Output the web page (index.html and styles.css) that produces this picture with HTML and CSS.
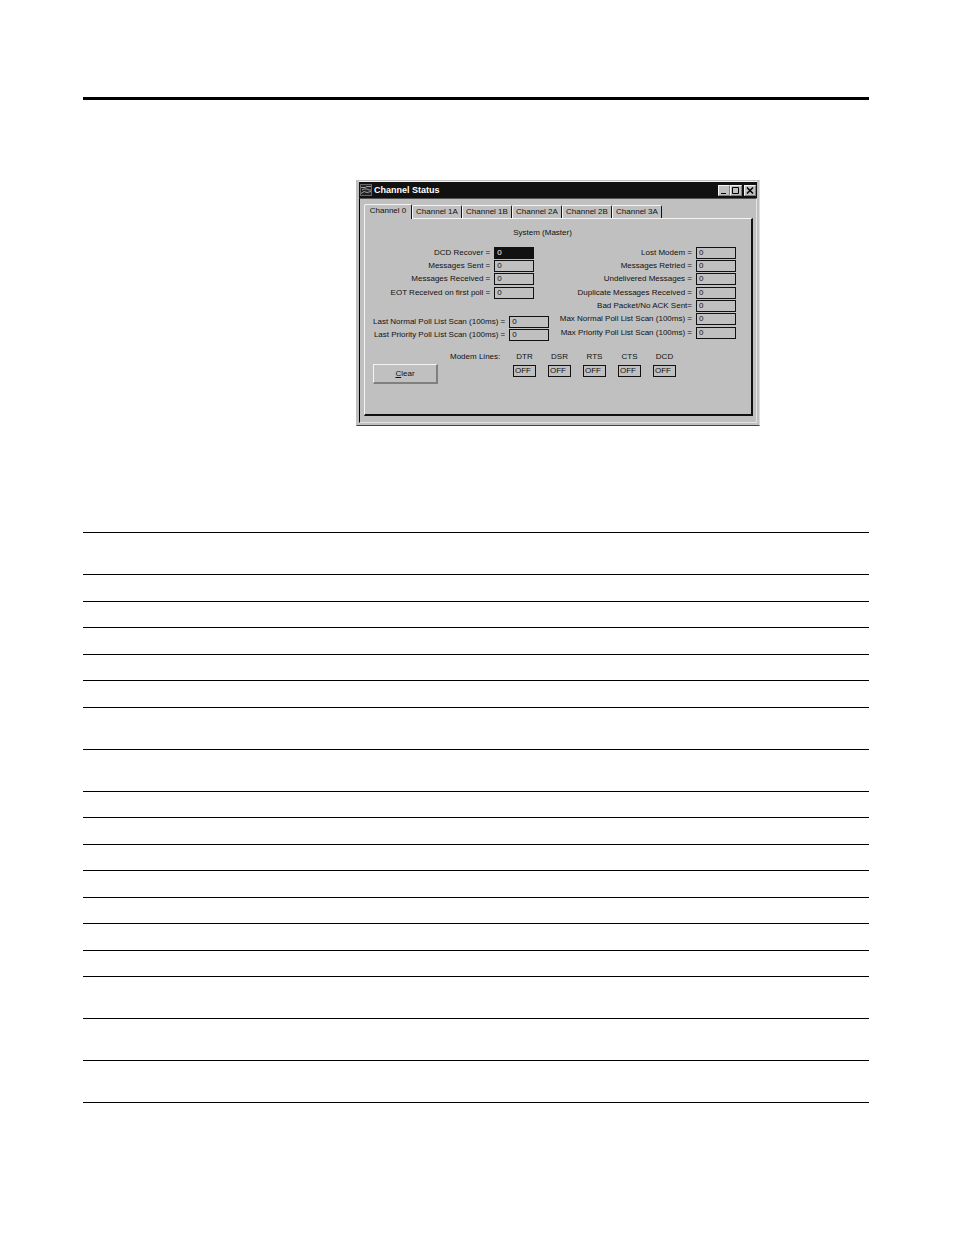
FILE: index.html
```html
<!DOCTYPE html>
<html lang="en">
  <head>
    <meta charset="UTF-8" />
    <meta name="viewport" content="width=device-width, initial-scale=1.0" />
    <title>Channel Status</title>
    <link rel="stylesheet" href="styles.css">
  </head>
  <body>
    <main class="page">
      <hr class="page-rule" />

      <section class="window">
        <header class="title-bar">
          <svg class="title-icon" viewBox="0 0 12 12" aria-hidden="true">
            <rect x="0.5" y="0.5" width="11" height="11" fill="#222" stroke="#666" />
            <path d="M1 3.5h4l2-1h4M2 6l2-1h3l2 1h2M1 9.5l3-2 3 1 4-1" fill="none" stroke="#999" />
          </svg>
          <h1>Channel Status</h1>
          <div class="title-buttons">
            <button type="button" aria-label="Minimize">
              <svg viewBox="0 0 10 9"><path d="M2 7.5h5" /></svg>
            </button>
            <button type="button" aria-label="Maximize">
              <svg viewBox="0 0 10 9"><path d="M1.5 1.5h6v6h-6z" /></svg>
            </button>
            <button type="button" aria-label="Close" class="close">
              <svg viewBox="0 0 10 9"><path d="M2 1.5l6 6M8 1.5l-6 6" stroke-width="1.5" /></svg>
            </button>
          </div>
        </header>

        <div class="window-body">
          <div class="tabs" role="tablist">
            <button type="button" role="tab" class="tab active" aria-selected="true">Channel 0</button>
            <button type="button" role="tab" class="tab">Channel 1A</button>
            <button type="button" role="tab" class="tab">Channel 1B</button>
            <button type="button" role="tab" class="tab">Channel 2A</button>
            <button type="button" role="tab" class="tab">Channel 2B</button>
            <button type="button" role="tab" class="tab">Channel 3A</button>
          </div>

          <div class="panel">
            <h2>System (Master)</h2>

            <div class="counters">
              <div class="column">
                <div class="fields">
                  <label for="dcd-recover">DCD Recover =</label>
                  <input id="dcd-recover" class="selected" value="0" readonly />
                  <label for="sent">Messages Sent =</label>
                  <input id="sent" value="0" readonly />
                  <label for="received">Messages Received =</label>
                  <input id="received" value="0" readonly />
                  <label for="eot">EOT Received on first poll =</label>
                  <input id="eot" value="0" readonly />
                </div>
                <div class="fields scan">
                  <label for="last-normal">Last Normal Poll List Scan (100ms) =</label>
                  <input id="last-normal" value="0" readonly />
                  <label for="last-priority">Last Priority Poll List Scan (100ms) =</label>
                  <input id="last-priority" value="0" readonly />
                </div>
              </div>

              <div class="fields">
                <label for="lost">Lost Modem =</label>
                <input id="lost" value="0" readonly />
                <label for="retried">Messages Retried =</label>
                <input id="retried" value="0" readonly />
                <label for="undelivered">Undelivered Messages =</label>
                <input id="undelivered" value="0" readonly />
                <label for="duplicate">Duplicate Messages Received =</label>
                <input id="duplicate" value="0" readonly />
                <label for="bad-packet">Bad Packet/No ACK Sent=</label>
                <input id="bad-packet" value="0" readonly />
                <label for="max-normal">Max Normal Poll List Scan (100ms) =</label>
                <input id="max-normal" value="0" readonly />
                <label for="max-priority">Max Priority Poll List Scan (100ms) =</label>
                <input id="max-priority" value="0" readonly />
              </div>
            </div>

            <div class="bottom">
              <button type="button" class="clear"><u>C</u>lear</button>
              <span class="lines-title">Modem Lines:</span>
              <div class="line">
                <label for="dtr">DTR</label>
                <input id="dtr" value="OFF" readonly />
              </div>
              <div class="line">
                <label for="dsr">DSR</label>
                <input id="dsr" value="OFF" readonly />
              </div>
              <div class="line">
                <label for="rts">RTS</label>
                <input id="rts" value="OFF" readonly />
              </div>
              <div class="line">
                <label for="cts">CTS</label>
                <input id="cts" value="OFF" readonly />
              </div>
              <div class="line">
                <label for="dcd">DCD</label>
                <input id="dcd" value="OFF" readonly />
              </div>
            </div>
          </div>
        </div>
      </section>

      <table class="ruled">
        <tbody>
          <tr class="tall"><td></td></tr>
          <tr><td></td></tr>
          <tr><td></td></tr>
          <tr><td></td></tr>
          <tr><td></td></tr>
          <tr><td></td></tr>
          <tr class="tall"><td></td></tr>
          <tr class="tall"><td></td></tr>
          <tr><td></td></tr>
          <tr><td></td></tr>
          <tr><td></td></tr>
          <tr><td></td></tr>
          <tr><td></td></tr>
          <tr><td></td></tr>
          <tr><td></td></tr>
          <tr class="tall"><td></td></tr>
          <tr class="tall"><td></td></tr>
          <tr class="tall"><td></td></tr>
        </tbody>
      </table>
    </main>
  </body>
</html>
```
FILE: styles.css
```css
:root {
  --face: #c0c0c0;
  --light: #f4f4f4;
  --shadow: #808080;
  --dark: #111;
}

* {
  box-sizing: border-box;
}

body {
  margin: 0;
  background: #fff;
  color: #111;
  font-family: 'Liberation Sans', Arial, sans-serif;
  font-size: 8px;
  line-height: 12px;
}

button,
input {
  margin: 0;
  padding: 0;
  border-radius: 0;
  background: var(--face);
  color: inherit;
  font: inherit;
}

.page {
  padding: 97px 85px 132px 83px;
}

.page-rule {
  height: 3px;
  margin: 0 0 80px;
  border: 0;
  background: #000;
}

/* Window */
.window {
  max-width: 404px;
  margin-left: 273px;
  padding: 0 2px 2px;
  border: 1px solid var(--face);
  border-right-color: #ddd;
  border-bottom-color: #444;
  background: var(--face);
}

.title-bar {
  display: flex;
  align-items: center;
  gap: 2px;
  height: 17px;
  padding: 0 1px;
  border-top: 1px solid var(--light);
  background: var(--dark);
  color: #fff;
}

.title-bar h1 {
  flex: 1;
  margin: 0;
  font-size: 9px;
  line-height: 12px;
}

.title-icon {
  width: 12px;
  height: 12px;
}

.title-buttons {
  display: flex;
}

.title-buttons button {
  width: 12px;
  height: 11px;
  border: 1px solid var(--light);
  border-right-color: var(--shadow);
  border-bottom-color: var(--shadow);
}

.title-buttons .close {
  margin-left: 2px;
}

.title-buttons svg {
  display: block;
  width: 10px;
  height: 9px;
  fill: none;
  stroke: #000;
}

.window-body {
  padding: 5px 3px 6px 4px;
  border: 1px solid #e4e4e4;
  border-top-color: #555;
  border-left-color: #000;
}

/* Tabs */
.tabs {
  display: flex;
  align-items: flex-end;
}

.tab {
  flex: 0 0 auto;
  width: 50px;
  height: 13px;
  border: 1px solid var(--light);
  border-right-color: var(--dark);
  border-bottom: 0;
  border-radius: 2px 2px 0 0;
  white-space: nowrap;
}

.tab.active {
  position: relative;
  width: 48px;
  height: 15px;
  margin-bottom: -1px;
  padding-bottom: 2px;
}

.panel {
  padding: 8px 15px 30px 8px;
  border: 1px solid var(--light);
  border-right: 2px solid var(--dark);
  border-bottom: 2px solid var(--dark);
}

.panel h2 {
  margin: 0 24px 8px 0;
  font-size: 8px;
  font-weight: normal;
  text-align: center;
}

.counters {
  display: flex;
  justify-content: space-between;
}

.fields {
  display: grid;
  grid-template-columns: auto 40px;
  grid-auto-rows: 13px 13px 14px;
  justify-content: end;
  column-gap: 4px;
  text-align: right;
  white-space: nowrap;
}

.fields input {
  width: 100%;
  height: 12px;
  padding-left: 2px;
  border: 1px solid var(--dark);
}

.fields .selected {
  background: var(--dark);
  color: #fff;
}

.column .fields {
  margin-right: 15px;
}

.column .scan {
  margin: 16px 0 0;
}

/* Modem lines */
.bottom {
  display: flex;
  align-items: flex-start;
  gap: 12px;
  margin-top: 9px;
}

.clear {
  width: 65px;
  height: 20px;
  margin-top: 13px;
  border: 1px solid var(--light);
  border-right: 2px solid var(--shadow);
  border-bottom: 2px solid var(--shadow);
}

.lines-title {
  width: 51px;
  white-space: nowrap;
}

.line {
  display: grid;
  grid-template-rows: 14px 12px;
  width: 23px;
  text-align: center;
}

.line input {
  width: 100%;
  padding-left: 1px;
  border: 1px solid var(--dark);
}

/* Ruled rows */
.ruled {
  width: 100%;
  margin-top: 106px;
  border-collapse: separate;
  border-spacing: 0;
  border-top: 1px solid #000;
}

.ruled td {
  height: 26px;
  padding: 0;
  border-bottom: 1px solid #000;
}

.ruled tr:nth-child(even) td {
  height: 27px;
}

.ruled .tall td,
.ruled .tall:nth-child(even) td {
  height: 42px;
}
```
